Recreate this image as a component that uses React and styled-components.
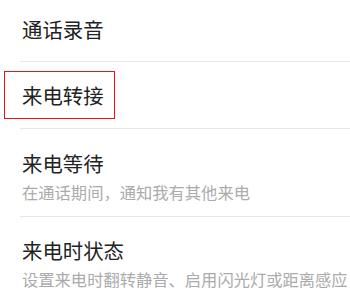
import React from "react";
import styled, { createGlobalStyle } from "styled-components";

const GlobalStyle = createGlobalStyle`
  html, body {
    margin: 0;
    padding: 0;
    background: #ffffff;
  }
  body {
    font-family: "Noto Sans CJK SC", "Noto Sans", sans-serif;
    overflow: hidden;
  }
`;

const List = styled.div`
  width: 350px;
  height: 300px;
  overflow: hidden;
  padding-left: 20px;
  box-sizing: border-box;
`;

const Row = styled.div`
  display: flex;
  flex-direction: column;
  justify-content: ${(p) => (p.top ? "flex-start" : "center")};
  height: ${(p) => p.h}px;
  padding-left: 2px;
  padding-top: ${(p) => p.pt || 0}px;
  box-sizing: border-box;
  border-bottom: ${(p) => (p.last ? "none" : "1px solid #e6e6e6")};
`;

const Title = styled.div`
  position: relative;
  font-size: 20.4px;
  line-height: 28px;
  color: #222222;
  width: fit-content;
`;

const Marked = styled(Title)`
  &::before {
    content: "";
    position: absolute;
    left: -18px;
    right: -11px;
    top: -10px;
    bottom: -10px;
    border: 1px solid #e0161b;
  }
`;

const Subtitle = styled.div`
  font-size: 16.3px;
  line-height: 22px;
  color: #ababab;
  margin-top: 4px;
  white-space: nowrap;
`;

export default function App() {
  return (
    <>
      <GlobalStyle />
      <List>
        <Row h={62} top pt={15}>
          <Title>通话录音</Title>
        </Row>
        <Row h={67}>
          <Marked>来电转接</Marked>
        </Row>
        <Row h={88} top pt={20}>
          <Title>来电等待</Title>
          <Subtitle>在通话期间，通知我有其他来电</Subtitle>
        </Row>
        <Row h={90} top pt={19} last>
          <Title>来电时状态</Title>
          <Subtitle>设置来电时翻转静音、启用闪光灯或距离感应</Subtitle>
        </Row>
      </List>
    </>
  );
}
